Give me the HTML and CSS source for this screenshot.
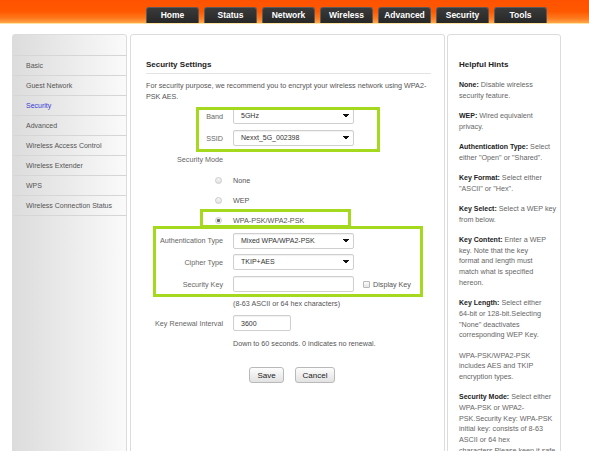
FILE: index.html
```html
<!DOCTYPE html>
<html lang="en">
<head>
<meta charset="UTF-8">
<title>Wireless - Security</title>
<link rel="stylesheet" href="styles.css">
</head>
<body>

<div class="header">
    <ul class="tabs">
        <li>Home</li>
        <li>Status</li>
        <li>Network</li>
        <li>Wireless</li>
        <li>Advanced</li>
        <li>Security</li>
        <li>Tools</li>
    </ul>
</div>

<div class="page">
    <div class="sidebar">
        <div class="side-top"></div>
        <a class="side-item">Basic</a>
        <a class="side-item">Guest Network</a>
        <a class="side-item active">Security</a>
        <a class="side-item">Advanced</a>
        <a class="side-item">Wireless Access Control</a>
        <a class="side-item">Wireless Extender</a>
        <a class="side-item">WPS</a>
        <a class="side-item">Wireless Connection Status</a>
    </div>

    <div class="main">
        <h2 class="title">Security Settings</h2>
        <p class="intro">For security purpose, we recommend you to encrypt your wireless network using WPA2-PSK AES.</p>

        <div class="form">
            <div class="row">
                <label class="cell-label">Band</label>
                <select class="field"><option>5GHz</option></select>
            </div>
            <div class="row">
                <label class="cell-label">SSID</label>
                <select class="field"><option>Nexxt_5G_002398</option></select>
            </div>
            <div class="row row-mode">
                <label class="cell-label">Security Mode</label>
            </div>
            <div class="row row-radio">
                <span class="cell-label"><input type="radio" name="mode" class="radio"></span>
                <span class="text">None</span>
            </div>
            <div class="row row-radio">
                <span class="cell-label"><input type="radio" name="mode" class="radio"></span>
                <span class="text">WEP</span>
            </div>
            <div class="row row-radio">
                <span class="cell-label"><input type="radio" name="mode" class="radio" checked></span>
                <span class="text">WPA-PSK/WPA2-PSK</span>
            </div>
            <div class="row row-auth">
                <label class="cell-label">Authentication Type</label>
                <select class="field"><option>Mixed WPA/WPA2-PSK</option></select>
            </div>
            <div class="row">
                <label class="cell-label">Cipher Type</label>
                <select class="field"><option>TKIP+AES</option></select>
            </div>
            <div class="row">
                <label class="cell-label">Security Key</label>
                <input type="text" class="field">
                <label class="show-key"><input type="checkbox" class="check"> Display Key</label>
            </div>
            <div class="row row-note">
                <span class="cell-label"></span>
                <span class="text">(8-63 ASCII or 64 hex characters)</span>
            </div>
            <div class="row row-renew">
                <label class="cell-label">Key Renewal Interval</label>
                <input type="text" class="field field-short" value="3600">
            </div>
            <div class="row row-note">
                <span class="cell-label"></span>
                <span class="text">Down to 60 seconds. 0 indicates no renewal.</span>
            </div>
        </div>

        <div class="actions">
            <button class="btn btn-save">Save</button>
            <button class="btn btn-cancel">Cancel</button>
        </div>

        <!-- highlight marks drawn over the form -->
        <div class="mark mark-band"></div>
        <div class="mark mark-wpa"></div>
        <div class="mark mark-key"></div>
    </div>

    <div class="hints">
        <h3 class="hints-title">Helpful Hints</h3>
        <p><b>None:</b> Disable wireless<br>security feature.</p>
        <p><b>WEP:</b> Wired equivalent<br>privacy.</p>
        <p><b>Authentication Type:</b> Select<br>either "Open" or "Shared".</p>
        <p><b>Key Format:</b> Select either<br>"ASCII" or "Hex".</p>
        <p><b>Key Select:</b> Select a WEP key<br>from below.</p>
        <p><b>Key Content:</b> Enter a WEP<br>key. Note that the key<br>format and length must<br>match what is specified<br>hereon.</p>
        <p><b>Key Length:</b> Select either<br>64-bit or 128-bit.Selecting<br>"None" deactivates<br>corresponding WEP Key.</p>
        <p>WPA-PSK/WPA2-PSK<br>includes AES and TKIP<br>encryption types.</p>
        <p><b>Security Mode:</b> Select either<br>WPA-PSK or WPA2-<br>PSK.Security Key: WPA-PSK<br>initial key: consists of 8-63<br>ASCII or 64 hex<br>characters.Please keep it safe.</p>
    </div>
</div>

</body>
</html>
```

FILE: styles.css
```css
body {
    margin: 0;
    font-family: "Liberation Sans", Arial, sans-serif;
    font-size: 7.2px;
    color: #555;
    background: #fff;
}

/* top bar */
.header {
    height: 23px;
    background: linear-gradient(to bottom, #ff5200 0%, #ff5800 50%, #ff7a1e 80%, #ffa54c 100%);
    border-bottom: 1px solid #ffe4a0;
}

.tabs {
    list-style: none;
    margin: 0;
    padding: 7px 0 0 146px;
    display: flex;
    gap: 5px;
}

.tabs li {
    width: 53px;
    height: 16px;
    box-sizing: border-box;
    background: linear-gradient(to bottom, #3a3a3a, #272727);
    border: 1px solid #5a5a5a;
    border-bottom: none;
    border-radius: 3px 3px 0 0;
    color: #fff;
    font-size: 8.5px;
    font-weight: bold;
    text-align: center;
    line-height: 15px;
}

/* three columns */
.page {
    display: flex;
    align-items: flex-start;
    padding: 10px 0 0 12px;
}

.sidebar {
    width: 115px;
    height: 430px;
    box-sizing: border-box;
    border: 1px solid #dcdcdc;
    border-radius: 3px 3px 0 0;
    background: linear-gradient(to right, #dcdcdc, #fafafa);
    font-size: 7px;
}

.side-top {
    height: 20px;
    border-bottom: 1px solid #d6d6d6;
}

.side-item {
    display: block;
    height: 19px;
    line-height: 19px;
    padding-left: 13px;
    border-bottom: 1px solid #d6d6d6;
    color: #555;
}

.side-item.active {
    color: #3a3ad6;
}

.main {
    position: relative;
    width: 315px;
    height: 430px;
    box-sizing: border-box;
    margin-left: 3px;
    padding: 24px 13px 0 15px;
    border: 1px solid #dcdcdc;
    border-radius: 3px 3px 0 0;
}

.title {
    margin: 0;
    font-size: 8px;
    line-height: 12px;
    padding-bottom: 2px;
    color: #222;
    border-bottom: 1px solid #e4e4e4;
}

.intro {
    margin: 7px 0 0;
    line-height: 10.5px;
    color: #555;
}

.form {
    margin-top: 3px;
}

.row {
    display: flex;
    align-items: center;
    height: 22px;
}

.row-mode { height: 21px; }
.row-radio { height: 20px; }
.row-auth { height: 21px; }
.row-note { height: 16px; }
.row-renew { height: 24px; }

.cell-label {
    width: 77px;
    margin-right: 10px;
    text-align: right;
    color: #666;
    display: flex;
    justify-content: flex-end;
}

.text {
    color: #555;
}

.field {
    width: 121px;
    height: 16px;
    box-sizing: border-box;
    margin: 0;
    padding: 0 7px;
    border: 1px solid #cfcfcf;
    border-radius: 2px;
    background-color: #fff;
    box-shadow: inset 0 1px 1px rgba(0, 0, 0, 0.06);
    font-family: inherit;
    font-size: 7px;
    line-height: 14px;
    color: #333;
    outline: none;
}

select.field {
    -webkit-appearance: none;
    appearance: none;
    background-image: linear-gradient(45deg, transparent 50%, #111 50%), linear-gradient(135deg, #111 50%, transparent 50%);
    background-position: right 7px top 5px, right 4px top 5px;
    background-size: 3px 4px;
    background-repeat: no-repeat;
}

.field-short {
    width: 58px;
}

.show-key {
    display: flex;
    align-items: center;
    margin-left: 9px;
    color: #555;
}

.check {
    -webkit-appearance: none;
    appearance: none;
    width: 7px;
    height: 7px;
    margin: 0 3px 0 0;
    border: 1px solid #b8b8b8;
    border-radius: 1px;
    background: linear-gradient(#fafafa, #e6e6e6);
}

.radio {
    -webkit-appearance: none;
    appearance: none;
    width: 7px;
    height: 7px;
    margin: 0 1px 0 0;
    border: 1px solid #cacaca;
    border-radius: 50%;
    background: linear-gradient(#f6f6f6, #e2e2e2);
}

.radio:checked {
    background: radial-gradient(circle, #666 0, #666 1.3px, #ececec 1.8px);
}

.actions {
    display: flex;
    gap: 11px;
    margin: 16px 0 0 103px;
}

.btn {
    height: 16px;
    padding: 0;
    border: 1px solid #b9b9b9;
    border-radius: 3px;
    background: linear-gradient(#fdfdfd, #e2e2e2);
    font-family: inherit;
    font-size: 8px;
    color: #222;
}

.btn-save { width: 35px; }
.btn-cancel { width: 40px; }

/* green highlight frames */
.mark {
    position: absolute;
    box-sizing: border-box;
    border: 3px solid #a5d91d;
    pointer-events: none;
}

.mark-band { left: 65px; top: 72px; width: 184px; height: 45px; }
.mark-wpa { left: 69px; top: 174px; width: 151px; height: 19px; }
.mark-key { left: 22px; top: 191px; width: 270px; height: 71px; }

.hints {
    width: 114px;
    height: 430px;
    box-sizing: border-box;
    margin-left: 2px;
    padding: 24px 4px 0 11px;
    border: 1px solid #dcdcdc;
    border-radius: 3px 3px 0 0;
    overflow: hidden;
    white-space: nowrap;
}

.hints-title {
    margin: 0 0 9px;
    font-size: 8px;
    line-height: 12px;
    color: #222;
}

.hints p {
    margin: 0 0 9.6px;
    line-height: 10.7px;
    font-size: 7.2px;
    color: #666;
}

.hints b {
    font-size: 7px;
    color: #222;
}
```
